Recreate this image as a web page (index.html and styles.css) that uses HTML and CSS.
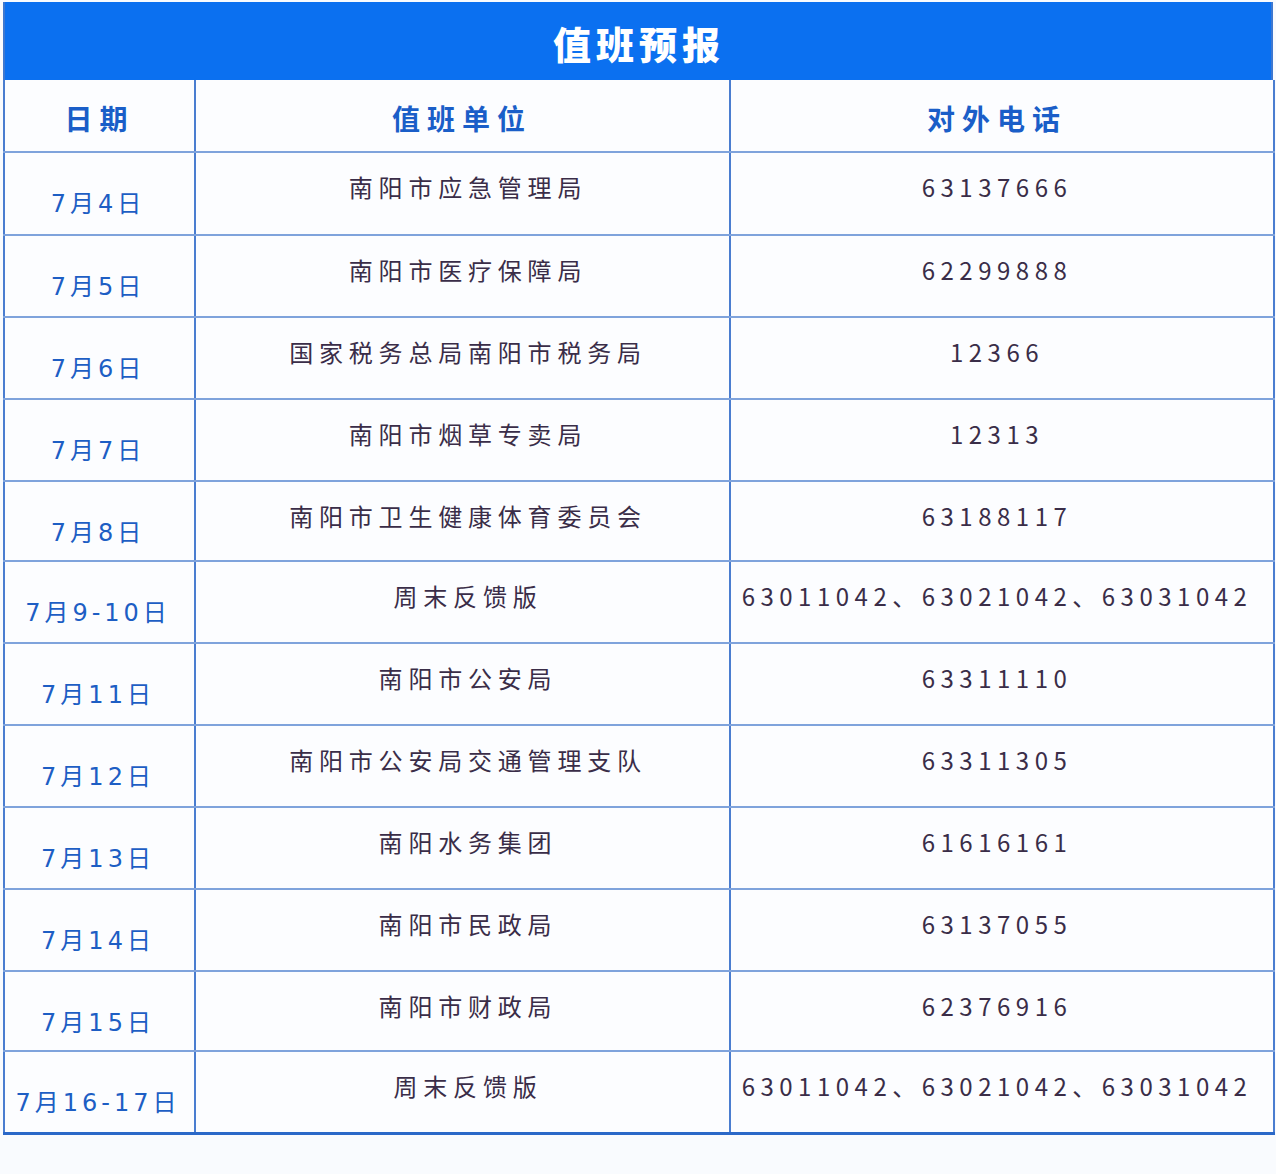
FILE: index.html
```html
<!DOCTYPE html>
<html lang="zh">
<head>
<meta charset="utf-8">
<title>值班预报</title>
<link rel="stylesheet" href="styles.css">
</head>
<body>
<div class="wrap">
  <div class="title">值班预报</div>
  <table class="duty">
    <colgroup>
      <col class="c-date">
      <col class="c-unit">
      <col class="c-phone">
    </colgroup>
    <thead>
      <tr class="head">
        <th class="h-date">日期</th>
        <th class="h-unit">值班单位</th>
        <th class="h-phone">对外电话</th>
      </tr>
    </thead>
    <tbody>
      <tr><td class="date">7月4日</td><td class="unit">南阳市应急管理局</td><td class="phone">63137666</td></tr>
      <tr><td class="date">7月5日</td><td class="unit">南阳市医疗保障局</td><td class="phone">62299888</td></tr>
      <tr><td class="date">7月6日</td><td class="unit">国家税务总局南阳市税务局</td><td class="phone">12366</td></tr>
      <tr><td class="date">7月7日</td><td class="unit">南阳市烟草专卖局</td><td class="phone">12313</td></tr>
      <tr class="short"><td class="date">7月8日</td><td class="unit">南阳市卫生健康体育委员会</td><td class="phone">63188117</td></tr>
      <tr><td class="date">7月9-10日</td><td class="unit">周末反馈版</td><td class="phone">63011042、63021042、63031042</td></tr>
      <tr><td class="date">7月11日</td><td class="unit">南阳市公安局</td><td class="phone">63311110</td></tr>
      <tr><td class="date">7月12日</td><td class="unit">南阳市公安局交通管理支队</td><td class="phone">63311305</td></tr>
      <tr><td class="date">7月13日</td><td class="unit">南阳水务集团</td><td class="phone">61616161</td></tr>
      <tr><td class="date">7月14日</td><td class="unit">南阳市民政局</td><td class="phone">63137055</td></tr>
      <tr class="short"><td class="date">7月15日</td><td class="unit">南阳市财政局</td><td class="phone">62376916</td></tr>
      <tr><td class="date">7月16-17日</td><td class="unit">周末反馈版</td><td class="phone">63011042、63021042、63031042</td></tr>
    </tbody>
  </table>
</div>
</body>
</html>
```
FILE: styles.css
```css
html, body {
  margin: 0;
  padding: 0;
  background: #f9fbfe;
}
body {
  font-family: "Noto Sans CJK SC", "Noto Sans", sans-serif;
}
.wrap {
  width: 1270px;
  margin: 2px 0 0 3px;
}
.title {
  height: 78px;
  box-sizing: border-box;
  padding-top: 4px;
  padding-left: 2px;
  background: #0b70f0;
  color: #ffffff;
  font-size: 38px;
  font-weight: 900;
  letter-spacing: 5px;
  line-height: 74px;
  text-align: center;
  border-left: 2px solid #3d78d0;
  border-right: 2px solid #3d78d0;
}
.duty {
  width: 1270px;
  border-collapse: collapse;
  table-layout: fixed;
  background: #fcfdff;
  border-bottom: 3px solid #2a68c8;
}
.c-date { width: 191px; }
.c-unit { width: 535px; }
.c-phone { width: 544px; }
.duty th, .duty td {
  border: 2px solid #4a7dd0;
  border-top-color: #7fa3dc;
  border-bottom-color: #7fa3dc;
  text-align: center;
  padding: 0;
}
.duty tr.head th {
  border-top: none;
  height: 67px;
  padding-top: 4px;
  font-size: 28px;
  font-weight: 700;
  letter-spacing: 7px;
  color: #1a5ec8;
  vertical-align: middle;
}
.duty th.h-date { padding-left: 0; }
.duty th.h-unit { padding-right: 1px; }
.duty th.h-phone { padding-right: 10px; }
.duty tbody tr { height: 82px; }
.duty tbody tr:first-child { height: 83px; }
.duty tbody tr.short { height: 80px; }
.duty td {
  vertical-align: top;
  font-size: 24px;
  line-height: 30px;
}
.duty td.date {
  font-family: "DejaVu Sans", "Noto Sans CJK SC", sans-serif;
  padding-top: 36px;
  padding-right: 3px;
  color: #1d5ec4;
  letter-spacing: 4px;
}
.duty td.unit {
  padding-top: 19px;
  padding-left: 11px;
  color: #3a2d48;
  letter-spacing: 5.8px;
}
.duty td.phone {
  padding-top: 19px;
  padding-right: 10px;
  color: #3a2d48;
  letter-spacing: 5.5px;
}
```
